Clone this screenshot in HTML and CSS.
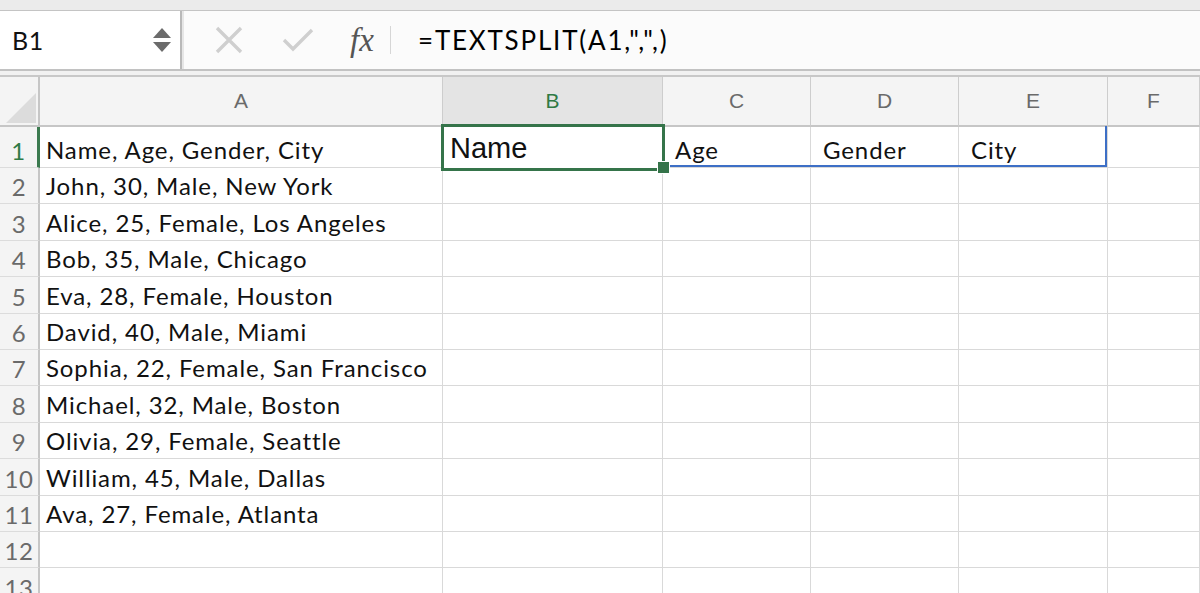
FILE: index.html
```html
<!DOCTYPE html>
<html>
<head>
<meta charset="utf-8">
<link rel="stylesheet" href="styles.css">
</head>
<body>
<div class="app">
  <div class="topstrip"></div>
  <div class="fbar">
    <div class="namebox">
      <span class="ref">B1</span>
      <div class="spin">
        <svg width="20" height="26" viewBox="0 0 20 26"><polygon points="10,1 19,11 1,11" fill="#6b6b6b"/><polygon points="1,15 19,15 10,25" fill="#6b6b6b"/></svg>
      </div>
    </div>
    <div class="fsep"></div>
    <div class="ficons">
      <svg class="ico-x" width="30" height="30" viewBox="0 0 30 30"><path d="M3 3 L27 27 M27 3 L3 27" stroke="#cfcfcf" stroke-width="3.4" fill="none"/></svg>
      <svg class="ico-ok" width="32" height="26" viewBox="0 0 32 26"><path d="M2 13 L11 22 L30 3" stroke="#cfcfcf" stroke-width="3.4" fill="none"/></svg>
      <span class="fx">fx</span>
      <div class="fdiv"></div>
    </div>
    <div class="formula">=TEXTSPLIT(A1,",",)</div>
  </div>
  <div class="gap"></div>
  <div class="sheet">
    <div class="c hdr corner"><svg width="36" height="40" viewBox="0 0 36 40"><polygon points="34,8 34,38 4,38" fill="#dcdcdc"/></svg></div>
    <div class="c hdr col">A</div>
    <div class="c hdr col sel">B</div>
    <div class="c hdr col">C</div>
    <div class="c hdr col">D</div>
    <div class="c hdr col">E</div>
    <div class="c hdr col">F</div>

    <div class="c hdr row rsel">1</div>
    <div class="c">Name, Age, Gender, City</div>
    <div class="c"></div>
    <div class="c split">Age</div>
    <div class="c split">Gender</div>
    <div class="c split">City</div>
    <div class="c"></div>

    <div class="c hdr row">2</div><div class="c">John, 30, Male, New York</div><div class="c"></div><div class="c"></div><div class="c"></div><div class="c"></div><div class="c"></div>
    <div class="c hdr row">3</div><div class="c">Alice, 25, Female, Los Angeles</div><div class="c"></div><div class="c"></div><div class="c"></div><div class="c"></div><div class="c"></div>
    <div class="c hdr row">4</div><div class="c">Bob, 35, Male, Chicago</div><div class="c"></div><div class="c"></div><div class="c"></div><div class="c"></div><div class="c"></div>
    <div class="c hdr row">5</div><div class="c">Eva, 28, Female, Houston</div><div class="c"></div><div class="c"></div><div class="c"></div><div class="c"></div><div class="c"></div>
    <div class="c hdr row">6</div><div class="c">David, 40, Male, Miami</div><div class="c"></div><div class="c"></div><div class="c"></div><div class="c"></div><div class="c"></div>
    <div class="c hdr row">7</div><div class="c">Sophia, 22, Female, San Francisco</div><div class="c"></div><div class="c"></div><div class="c"></div><div class="c"></div><div class="c"></div>
    <div class="c hdr row">8</div><div class="c">Michael, 32, Male, Boston</div><div class="c"></div><div class="c"></div><div class="c"></div><div class="c"></div><div class="c"></div>
    <div class="c hdr row">9</div><div class="c">Olivia, 29, Female, Seattle</div><div class="c"></div><div class="c"></div><div class="c"></div><div class="c"></div><div class="c"></div>
    <div class="c hdr row">10</div><div class="c">William, 45, Male, Dallas</div><div class="c"></div><div class="c"></div><div class="c"></div><div class="c"></div><div class="c"></div>
    <div class="c hdr row">11</div><div class="c">Ava, 27, Female, Atlanta</div><div class="c"></div><div class="c"></div><div class="c"></div><div class="c"></div><div class="c"></div>
    <div class="c hdr row">12</div><div class="c"></div><div class="c"></div><div class="c"></div><div class="c"></div><div class="c"></div><div class="c"></div>
    <div class="c hdr row">13</div><div class="c"></div><div class="c"></div><div class="c"></div><div class="c"></div><div class="c"></div><div class="c"></div>

    <div class="spill"></div>
    <div class="active"><span class="edit">Name</span></div>
    <div class="handle"></div>
  </div>
</div>
</body>
</html>
```
FILE: styles.css
```css
html, body {
  margin: 0;
  padding: 0;
  background: #ffffff;
  overflow: hidden;
}
.app {
  width: 1200px;
  height: 593px;
  overflow: hidden;
  font-family: Lato, "Open Sans", sans-serif;
}
.topstrip {
  height: 10px;
  background: #ebebeb;
  border-bottom: 1px solid #c4c4c4;
}
.fbar {
  height: 58px;
  display: flex;
  background: #fbfbfb;
  border-bottom: 2px solid #c2c2c2;
}
.namebox {
  width: 180px;
  background: #ffffff;
  display: flex;
  align-items: center;
  justify-content: space-between;
  border-right: 2px solid #b9b9b9;
}
.ref {
  padding-left: 12px;
  font-size: 25px;
  color: #111;
  letter-spacing: 0.5px;
  font-family: Lato, sans-serif;
}
.spin {
  width: 20px;
  height: 26px;
  margin-right: 8px;
  display: flex;
}
.fsep {
  width: 2px;
  background: #e6e6e6;
}
.ficons {
  display: flex;
  align-items: center;
  width: 234px;
}
.ico-x { margin-left: 30px; }
.ico-ok { margin-left: 38px; }
.fx {
  margin-left: 36px;
  font-family: "Liberation Serif", "DejaVu Serif", serif;
  font-style: italic;
  font-size: 33px;
  color: #555555;
  margin-top: 0;
}
.fdiv {
  width: 1px;
  height: 28px;
  background: #d6d6d6;
  margin-left: 16px;
}
.formula {
  display: flex;
  align-items: center;
  font-size: 26px;
  letter-spacing: 1.8px;
  color: #000;
  font-family: Lato, sans-serif;
  margin-top: 0;
}
.gap {
  height: 4px;
  background: #f1f1f1;
  border-bottom: 2px solid #c8c8c8;
}
.sheet {
  position: relative;
  display: grid;
  grid-template-columns: 40px 403px 220px 148px 148px 149px 92px;
  grid-template-rows: 50px 41px 36px 37px 36px 37px 36px 36px 37px 36px 37px 36px 36px 37px;
}
.c {
  box-sizing: border-box;
  border-right: 1px solid #d9d9d9;
  border-bottom: 1px solid #d9d9d9;
  display: flex;
  align-items: flex-end;
  padding: 0 0 3px 6px;
  font-size: 24px;
  letter-spacing: 0.9px;
  color: #111;
  white-space: nowrap;
  overflow: visible;
  line-height: 28px;
}
.c.split {
  padding-left: 12px;
}
.hdr {
  background: #f4f4f4;
  color: #6a6a6a;
  font-family: "Liberation Sans", Arial, sans-serif;
  border-color: #cdcdcd;
  letter-spacing: 0;
}
.col {
  justify-content: center;
  align-items: center;
  padding: 0;
  font-size: 21px;
  border-bottom: 2px solid #c6c6c6;
}
.col.sel {
  background: #e4e4e4;
  color: #2f7a45;
}
.corner {
  padding: 0;
  align-items: flex-end;
  justify-content: flex-end;
  border-right: 2px solid #c6c6c6;
  border-bottom: 2px solid #c6c6c6;
}
.row {
  padding: 0 0 2px 0;
  justify-content: center;
  font-family: Lato, sans-serif;
  font-size: 24px;
  letter-spacing: 0.5px;
  border-right: 2px solid #c6c6c6;
  border-bottom: 1px solid #dcdcdc;
}
.row.rsel {
  color: #2f7a45;
  border-right: 3px solid #3b7a4f;
}
.spill {
  position: absolute;
  left: 664px;
  top: 49px;
  width: 443px;
  height: 41px;
  border-right: 2px solid #3d6fc6;
  border-bottom: 2px solid #3d6fc6;
  box-sizing: border-box;
}
.active {
  position: absolute;
  left: 441px;
  top: 47px;
  width: 224px;
  height: 47px;
  border: 3px solid #35744a;
  box-sizing: border-box;
  background: #ffffff;
  display: flex;
  align-items: center;
  padding-left: 6px;
}
.edit {
  font-family: "Liberation Sans", Arial, sans-serif;
  font-size: 29px;
  color: #111;
  margin-top: 2px;
}
.handle {
  position: absolute;
  left: 657px;
  top: 84px;
  width: 11px;
  height: 11px;
  background: #35744a;
  border: 1px solid #fff;
}
```
